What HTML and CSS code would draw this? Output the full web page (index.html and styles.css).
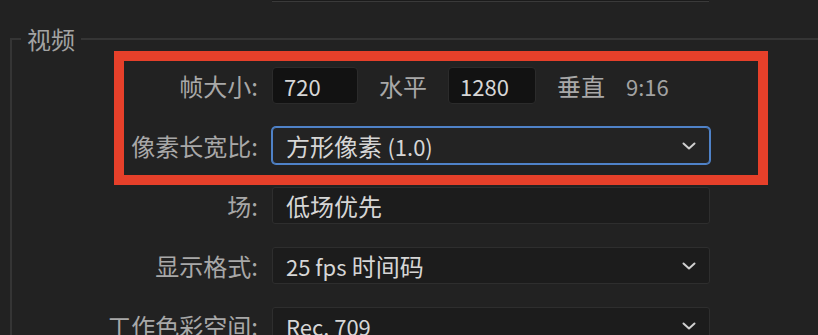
FILE: index.html
```html
<!DOCTYPE html>
<html lang="zh-CN">
<head>
<meta charset="utf-8">
<title>视频设置</title>
<link rel="stylesheet" href="styles.css">
</head>
<body>
<div class="top-field"></div>
<fieldset class="group">
  <legend class="group-title">视频</legend>
  <div class="form">
    <div class="label">帧大小:</div>
    <div class="size-row">
      <div class="num-input"><span class="lt">720</span></div>
      <span class="unit">水平</span>
      <div class="num-input wide"><span class="lt">1280</span></div>
      <span class="unit">垂直</span>
      <span class="ratio lt">9:16</span>
    </div>

    <div class="label">像素长宽比:</div>
    <div class="select focused">
      <span class="value">方形像素 <span class="lt">(1.0)</span></span>
      <svg class="chev" viewBox="0 0 14 8" width="14" height="8"><path d="M1.5 1.5 L7 6.5 L12.5 1.5" fill="none" stroke="#cfcfcf" stroke-width="2" stroke-linecap="round" stroke-linejoin="round"/></svg>
    </div>

    <div class="label">场:</div>
    <div class="select">
      <span class="value">低场优先</span>
    </div>

    <div class="label">显示格式:</div>
    <div class="select">
      <span class="value"><span class="lt">25 fps</span> 时间码</span>
      <svg class="chev" viewBox="0 0 14 8" width="14" height="8"><path d="M1.5 1.5 L7 6.5 L12.5 1.5" fill="none" stroke="#cfcfcf" stroke-width="2" stroke-linecap="round" stroke-linejoin="round"/></svg>
    </div>

    <div class="label">工作色彩空间:</div>
    <div class="select">
      <span class="value lt">Rec. 709</span>
      <svg class="chev" viewBox="0 0 14 8" width="14" height="8"><path d="M1.5 1.5 L7 6.5 L12.5 1.5" fill="none" stroke="#cfcfcf" stroke-width="2" stroke-linecap="round" stroke-linejoin="round"/></svg>
    </div>
  </div>
</fieldset>
<div class="highlight"></div>
</body>
</html>
```

FILE: styles.css
```css
html, body {
  margin: 0;
  padding: 0;
  background: #222222;
  overflow: hidden;
}
body {
  width: 818px;
  height: 335px;
  position: relative;
  font-family: "Noto Sans CJK SC", "Noto Sans", sans-serif;
  font-size: 24px;
  color: #a9a9a9;
}
.lt {
  font-size: 22px;
}
.top-field {
  margin-left: 272px;
  width: 437px;
  height: 1px;
  background: #1b1b1b;
  border-bottom: 1px solid #3a3a3a;
}
.group {
  margin: 24px 0 0 10px;
  padding: 0;
  border: 2px solid #353535;
  border-right: none;
  border-bottom: none;
  min-width: 0;
}
.group-title {
  margin-left: 9px;
  padding: 0 6px;
  line-height: 26px;
  color: #a3a3a3;
}
.form {
  display: grid;
  grid-template-columns: 246px 438px;
  grid-auto-rows: 37px;
  column-gap: 14px;
  row-gap: 23px;
  padding-top: 15px;
}
.label {
  display: flex;
  align-items: center;
  justify-content: flex-end;
  color: #a8a8a8;
  white-space: nowrap;
}
.size-row {
  display: flex;
  align-items: center;
  gap: 21px;
}
.num-input {
  box-sizing: border-box;
  width: 86px;
  height: 37px;
  padding-left: 11px;
  display: flex;
  align-items: center;
  background: #121212;
  border: 1px solid #2b2b2b;
  border-radius: 4px;
  color: #d6d6d6;
}
.num-input.wide {
  width: 88px;
}
.unit {
  color: #a8a8a8;
}
.ratio {
  color: #a3a3a3;
}
.select {
  box-sizing: border-box;
  height: 37px;
  padding: 0 13px 0 13px;
  display: flex;
  align-items: center;
  justify-content: space-between;
  background: #1c1c1c;
  border: 1px solid #2e2e2e;
  border-radius: 3px;
  color: #d6d6d6;
}
.value {
  white-space: nowrap;
}
.select.focused {
  background: #232323;
  border-color: #4f82c8;
  box-shadow: 0 0 0 1px #4f82c8;
  border-radius: 4px;
}
.chev {
  display: block;
  flex: none;
}
.highlight {
  position: absolute;
  left: 114px;
  top: 51px;
  width: 654px;
  height: 134px;
  box-sizing: border-box;
  border: 10px solid #e6402a;
  pointer-events: none;
}
```
